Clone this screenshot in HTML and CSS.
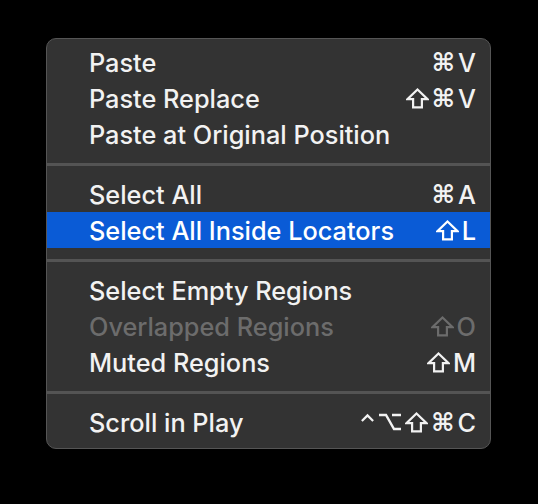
FILE: index.html
```html
<!DOCTYPE html>
<html>
<head>
<meta charset="utf-8">
<link rel="stylesheet" href="styles.css">
</head>
<body>
<div class="menu">
  <div class="item"><span class="label">Paste</span><span class="key"><span class="cmd">⌘</span>V</span></div>
  <div class="item"><span class="label">Paste Replace</span><span class="key"><svg class="shift" viewBox="0 0 22 20"><path d="M11 1.4 L20.6 10.6 H15.2 V18.4 H6.8 V10.6 H1.4 Z"/></svg><span class="cmd">⌘</span>V</span></div>
  <div class="item"><span class="label">Paste at Original Position</span><span class="key"></span></div>
  <div class="sep"></div>
  <div class="item"><span class="label">Select All</span><span class="key"><span class="cmd">⌘</span>A</span></div>
  <div class="item active"><span class="label">Select All Inside Locators</span><span class="key"><svg class="shift" viewBox="0 0 22 20"><path d="M11 1.4 L20.6 10.6 H15.2 V18.4 H6.8 V10.6 H1.4 Z"/></svg>L</span></div>
  <div class="sep"></div>
  <div class="item"><span class="label">Select Empty Regions</span><span class="key"></span></div>
  <div class="item disabled"><span class="label">Overlapped Regions</span><span class="key"><svg class="shift" viewBox="0 0 22 20"><path d="M11 1.4 L20.6 10.6 H15.2 V18.4 H6.8 V10.6 H1.4 Z"/></svg>O</span></div>
  <div class="item"><span class="label">Muted Regions</span><span class="key"><svg class="shift" viewBox="0 0 22 20"><path d="M11 1.4 L20.6 10.6 H15.2 V18.4 H6.8 V10.6 H1.4 Z"/></svg>M</span></div>
  <div class="sep"></div>
  <div class="item"><span class="label">Scroll in Play</span><span class="key"><svg class="ctrl" viewBox="0 0 16 20"><path d="M2 9 L8 3 L14 9"/></svg><svg class="opt" viewBox="0 0 24 20"><path d="M1 3 H8 L16 17 H23 M14 3 H23"/></svg><svg class="shift" viewBox="0 0 22 20"><path d="M11 1.4 L20.6 10.6 H15.2 V18.4 H6.8 V10.6 H1.4 Z"/></svg><span class="cmd">⌘</span>C</span></div>
</div>
</body>
</html>
```
FILE: styles.css
```css
html, body {
  margin: 0;
  padding: 0;
  background: #000;
}
body {
  padding: 38px 0 0 46px;
  font-family: Inter, "Liberation Sans", "DejaVu Sans", sans-serif;
}
.menu {
  box-sizing: border-box;
  width: 445px;
  height: 411px;
  background: #333333;
  border: 1px solid #555555;
  border-radius: 10px;
  padding: 5px 0 8px 0;
  display: flex;
  flex-direction: column;
}
.item {
  height: 36px;
  display: flex;
  align-items: center;
  justify-content: space-between;
  padding: 0 14px 0 42px;
  color: #f2f2f2;
  font-size: 25.3px;
  font-weight: 500;
}
.item.active {
  background: #0a5bd6;
  color: #fff;
}
.item.disabled {
  color: #6c6c6c;
}
.key {
  display: flex;
  align-items: center;
  gap: 3px;
}
.cmd {
  font-family: "DejaVu Sans", sans-serif;
  font-weight: bold;
  font-size: 25px;
}
.shift {
  width: 23px;
  height: 21px;
  fill: none;
  stroke: currentColor;
  stroke-width: 2.1;
  stroke-linejoin: miter;
}
.ctrl {
  width: 15px;
  height: 20px;
  fill: none;
  stroke: currentColor;
  stroke-width: 2.4;
}
.opt {
  width: 24px;
  height: 20px;
  fill: none;
  stroke: currentColor;
  stroke-width: 2.4;
}
.sep {
  height: 24px;
  display: flex;
  align-items: center;
}
.sep::before {
  content: "";
  display: block;
  width: 100%;
  height: 3px;
  background: #545454;
}
```
